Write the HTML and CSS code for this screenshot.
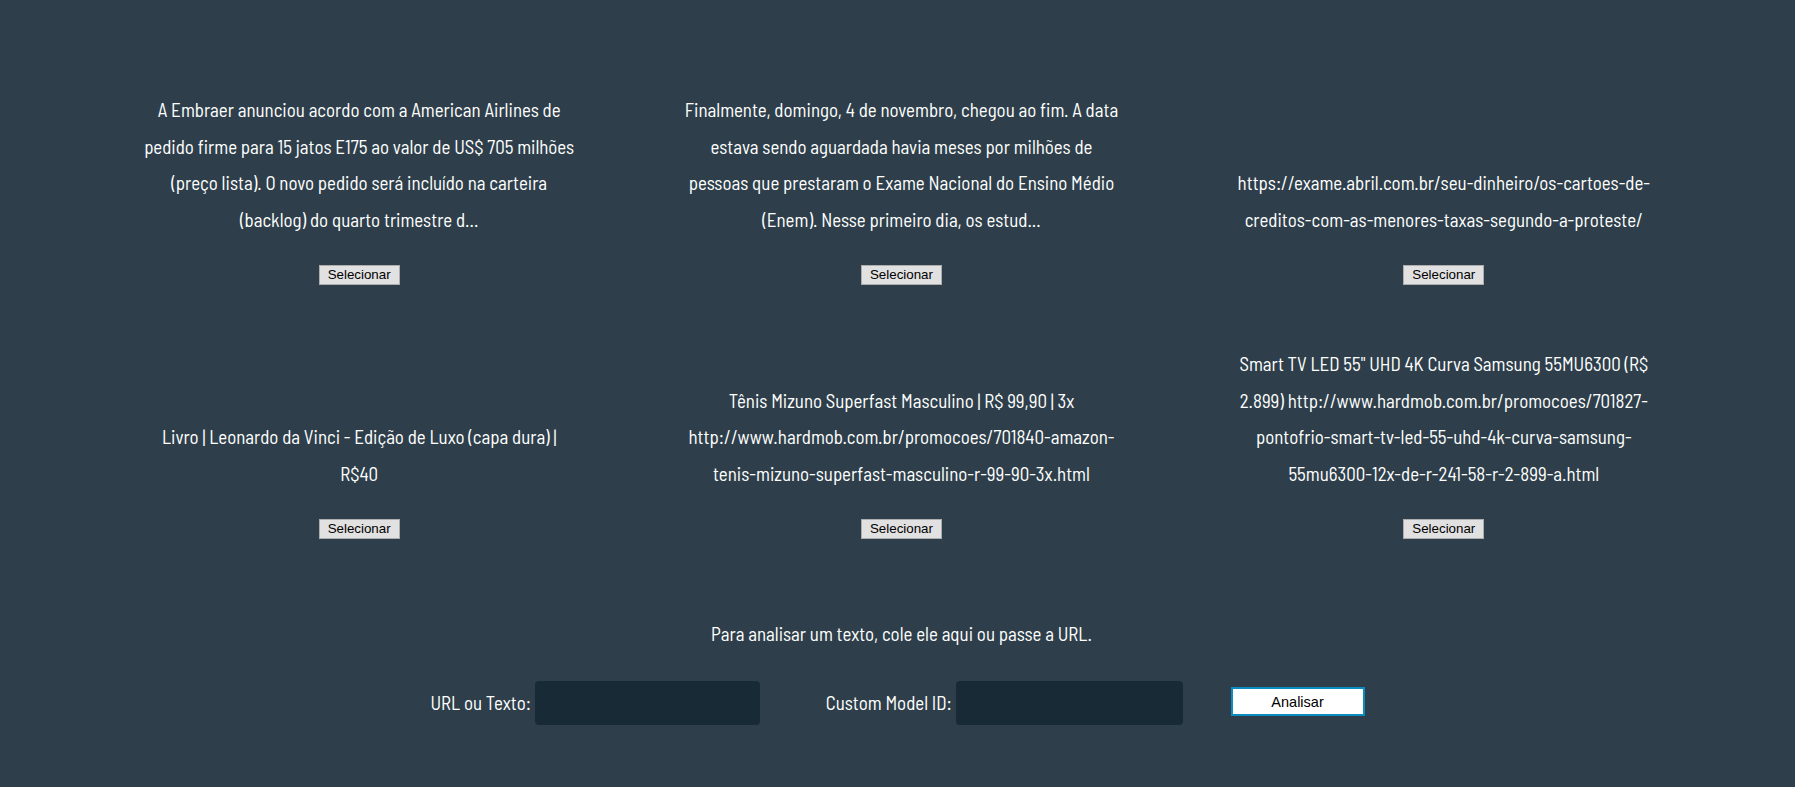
FILE: index.html
```html
<!DOCTYPE html>
<html lang="pt-BR">
<head>
<meta charset="utf-8">
<title>Analisar</title>
<link rel="stylesheet" href="styles.css">
</head>
<body>
<main class="page">
  <section class="grid">
    <div class="card">
      <p class="card-text">A Embraer anunciou acordo com a American Airlines de<br>pedido firme para 15 jatos E175 ao valor de US$ 705 milhões<br>(preço lista). O novo pedido será incluído na carteira<br>(backlog) do quarto trimestre d...</p>
      <button class="select-btn" type="button">Selecionar</button>
    </div>
    <div class="card">
      <p class="card-text">Finalmente, domingo, 4 de novembro, chegou ao fim. A data<br>estava sendo aguardada havia meses por milhões de<br>pessoas que prestaram o Exame Nacional do Ensino Médio<br>(Enem). Nesse primeiro dia, os estud...</p>
      <button class="select-btn" type="button">Selecionar</button>
    </div>
    <div class="card">
      <p class="card-text">https://exame.abril.com.br/seu-dinheiro/os-cartoes-de-<br>creditos-com-as-menores-taxas-segundo-a-proteste/</p>
      <button class="select-btn" type="button">Selecionar</button>
    </div>
    <div class="card">
      <p class="card-text">Livro | Leonardo da Vinci - Edição de Luxo (capa dura) |<br>R$40</p>
      <button class="select-btn" type="button">Selecionar</button>
    </div>
    <div class="card">
      <p class="card-text">Tênis Mizuno Superfast Masculino | R$ 99,90 | 3x<br>http://www.hardmob.com.br/promocoes/701840-amazon-<br>tenis-mizuno-superfast-masculino-r-99-90-3x.html</p>
      <button class="select-btn" type="button">Selecionar</button>
    </div>
    <div class="card">
      <p class="card-text">Smart TV LED 55" UHD 4K Curva Samsung 55MU6300 (R$<br>2.899) http://www.hardmob.com.br/promocoes/701827-<br>pontofrio-smart-tv-led-55-uhd-4k-curva-samsung-<br>55mu6300-12x-de-r-241-58-r-2-899-a.html</p>
      <button class="select-btn" type="button">Selecionar</button>
    </div>
  </section>

  <p class="intro">Para analisar um texto, cole ele aqui ou passe a URL.</p>

  <form class="form-row">
    <label class="field field-url">URL ou Texto: <input class="field-input input-url" type="text"></label>
    <label class="field field-model">Custom Model ID: <input class="field-input input-model" type="text"></label>
    <button class="analyze-btn" type="button">Analisar</button>
  </form>
</main>
</body>
</html>
```
FILE: styles.css
```css
html, body {
  margin: 0;
  padding: 0;
}

body {
  background: #2e3f4b;
  color: #ffffff;
  font-family: "Barlow Semi Condensed", "Roboto Condensed", "Liberation Sans", sans-serif;
  font-size: 18.9px;
  line-height: 36.7px;
}

.page {
  padding-top: 92px;
}

.grid {
  width: 1627px;
  margin: 0 auto;
  padding-left: 8px;
  display: grid;
  grid-template-columns: repeat(3, 1fr);
  row-gap: 61px;
}

.card {
  display: flex;
  flex-direction: column;
  justify-content: flex-end;
  align-items: center;
}

.card-text {
  margin: 0 0 26px;
  text-align: center;
  white-space: nowrap;
}

.select-btn {
  width: 81px;
  height: 20px;
  padding: 0;
  background: #e1e1e1;
  border: 1px solid #adadad;
  border-radius: 0;
  color: #000000;
  font-family: "Liberation Sans", Arial, sans-serif;
  font-size: 13.33px;
  line-height: 18px;
}

.intro {
  margin: 77px 0 0;
  padding-left: 8px;
  text-align: center;
}

.form-row {
  margin: 29px 0 0;
  display: flex;
  justify-content: center;
  align-items: center;
}

.field {
  display: flex;
  align-items: center;
  white-space: pre;
}

.field-url {
  margin-right: 66px;
}

.field-model {
  margin-right: 48px;
}

.field-input {
  height: 44px;
  box-sizing: border-box;
  background: #182a36;
  border: none;
  border-radius: 4px;
  color: #ffffff;
  padding: 0 10px;
  font: inherit;
}

.input-url {
  width: 225px;
}

.input-model {
  width: 227px;
}

.analyze-btn {
  width: 134px;
  height: 29px;
  margin-bottom: 3px;
  box-sizing: border-box;
  background: #ffffff;
  border: 2px solid #0b8cc0;
  border-radius: 0;
  color: #000000;
  font-family: "Liberation Sans", Arial, sans-serif;
  font-size: 14.5px;
  padding: 0;
}
```
